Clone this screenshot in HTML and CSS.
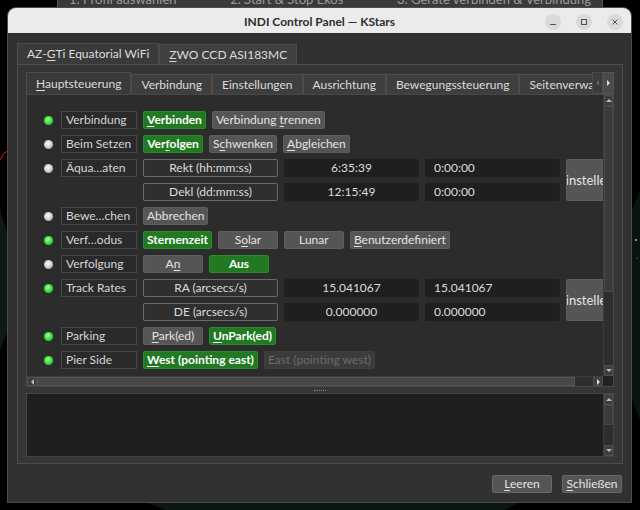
FILE: index.html
```html
<!DOCTYPE html>
<html lang="de">
<head>
  <meta charset="UTF-8">
  <title>INDI Control Panel — KStars</title>
  <link rel="stylesheet" href="styles.css">
</head>
<body>
  <div class="desktop">
    <svg class="sky" width="640" height="510" viewBox="0 0 640 510">
      <path d="M0 160 L4 153 L8 151" stroke="#d01818" fill="none" stroke-width="1"/>
      <path d="M0 210 L8 236 L8 330 L0 350 Z" fill="#0b1a12"/>
      <path d="M146 502 L520 502 L505 510 L165 510 Z" fill="#0a1711"/>
      <path d="M632 210 L640 190 L640 420 L632 400 Z" fill="#08140e"/>
      <circle cx="636" cy="240" r="0.9" fill="#cfcfcf"/>
      <circle cx="637" cy="258" r="0.6" fill="#9a9a9a"/>
    </svg>

    <div class="ekos-strip">
      <span>1. Profil auswählen</span>
      <span>2. Start &amp; Stop Ekos</span>
      <span>3. Geräte verbinden &amp; Verbindung</span>
    </div>

    <div class="window">
      <div class="titlebar">
        <span class="title">INDI Control Panel — KStars</span>
        <div class="wm-buttons">
          <span class="wm-btn"><svg width="16" height="16" viewBox="0 0 16 16"><path d="M5 10.5h6" stroke="#555" stroke-width="1"/></svg></span>
          <span class="wm-btn"><svg width="16" height="16" viewBox="0 0 16 16"><rect x="5.5" y="5.5" width="5" height="5" fill="none" stroke="#555" stroke-width="1"/></svg></span>
          <span class="wm-btn"><svg width="16" height="16" viewBox="0 0 16 16"><path d="M5.5 5.5l5 5M10.5 5.5l-5 5" stroke="#555" stroke-width="1"/></svg></span>
        </div>
      </div>

      <div class="win-body">
        <div class="device-tabs">
          <div class="tab active">AZ-<u>G</u>Ti Equatorial WiFi</div>
          <div class="tab"><u>Z</u>WO CCD ASI183MC</div>
        </div>

        <div class="device-pane">
          <div class="group-tabs">
            <div class="tabs-clip">
              <div class="tab active"><u>H</u>auptsteuerung</div>
              <div class="tab">Verbindung</div>
              <div class="tab">Einstellungen</div>
              <div class="tab">Ausrichtung</div>
              <div class="tab">Bewegungssteuerung</div>
              <div class="tab">Seitenverwaltung</div>
            </div>
            <div class="tab-scroll">
              <span class="arrow-btn disabled"><i class="tri left"></i></span>
              <span class="arrow-btn"><i class="tri right"></i></span>
            </div>
          </div>

          <div class="group-pane">
            <div class="viewport">
              <div class="prop">
                <span class="led on"></span>
                <span class="prop-label">Verbindung</span>
                <div class="switches">
                  <div class="btn checked"><u>V</u>erbinden</div>
                  <div class="btn">Verbindung <u>t</u>rennen</div>
                </div>
              </div>

              <div class="prop">
                <span class="led idle"></span>
                <span class="prop-label">Beim Setzen</span>
                <div class="switches">
                  <div class="btn checked">Ver<u>f</u>olgen</div>
                  <div class="btn">S<u>c</u>hwenken</div>
                  <div class="btn"><u>A</u>bgleichen</div>
                </div>
              </div>

              <div class="prop">
                <span class="led idle"></span>
                <span class="prop-label">Äqua…aten</span>
                <div class="numbers">
                  <span class="num-label">Rekt (hh:mm:ss)</span>
                  <span class="num-value">6:35:39</span>
                  <span class="num-input">0:00:00</span>
                  <div class="btn set"><span>Einstellen</span></div>
                  <span class="num-label">Dekl (dd:mm:ss)</span>
                  <span class="num-value">12:15:49</span>
                  <span class="num-input">0:00:00</span>
                </div>
              </div>

              <div class="prop">
                <span class="led idle"></span>
                <span class="prop-label">Bewe…chen</span>
                <div class="switches">
                  <div class="btn">Abbrechen</div>
                </div>
              </div>

              <div class="prop">
                <span class="led on"></span>
                <span class="prop-label">Verf…odus</span>
                <div class="switches">
                  <div class="btn checked">Sternenzeit</div>
                  <div class="btn">S<u>o</u>lar</div>
                  <div class="btn">Lunar</div>
                  <div class="btn"><u>B</u>enutzerdefiniert</div>
                </div>
              </div>

              <div class="prop">
                <span class="led idle"></span>
                <span class="prop-label">Verfolgung</span>
                <div class="switches">
                  <div class="btn">A<u>n</u></div>
                  <div class="btn checked">Aus</div>
                </div>
              </div>

              <div class="prop">
                <span class="led on"></span>
                <span class="prop-label">Track Rates</span>
                <div class="numbers">
                  <span class="num-label">RA (arcsecs/s)</span>
                  <span class="num-value">15.041067</span>
                  <span class="num-input">15.041067</span>
                  <div class="btn set"><span>Einstellen</span></div>
                  <span class="num-label">DE (arcsecs/s)</span>
                  <span class="num-value">0.000000</span>
                  <span class="num-input">0.000000</span>
                </div>
              </div>

              <div class="prop">
                <span class="led on"></span>
                <span class="prop-label">Parking</span>
                <div class="switches">
                  <div class="btn"><u>P</u>ark(ed)</div>
                  <div class="btn checked"><u>U</u>nPark(ed)</div>
                </div>
              </div>

              <div class="prop">
                <span class="led on"></span>
                <span class="prop-label">Pier Side</span>
                <div class="switches">
                  <div class="btn checked"><u>W</u>est (pointing east)</div>
                  <div class="btn disabled">East (pointing west)</div>
                </div>
              </div>
            </div>

            <div class="vscroll">
              <span class="arrow-btn"><i class="tri up"></i></span>
              <span class="handle"></span>
              <span class="track"></span>
              <span class="arrow-btn"><i class="tri down"></i></span>
            </div>

            <div class="hscroll">
              <span class="arrow-btn"><i class="tri left"></i></span>
              <span class="handle"></span>
              <span class="track"></span>
              <span class="arrow-btn"><i class="tri right"></i></span>
            </div>
            <div class="corner"></div>
          </div>

          <div class="splitter"><span class="grip"></span></div>

          <div class="log">
            <div class="log-text"></div>
            <div class="vscroll">
              <span class="arrow-btn"><i class="tri up"></i></span>
              <span class="handle"></span>
              <span class="track"></span>
              <span class="arrow-btn"><i class="tri down"></i></span>
            </div>
          </div>
        </div>

        <div class="dialog-buttons">
          <div class="btn"><u>L</u>eeren</div>
          <div class="btn"><u>S</u>chließen</div>
        </div>
      </div>
    </div>
  </div>
</body>
</html>
```

FILE: styles.css
```css
/* INDI control panel, dark Qt style */
* {
  box-sizing: border-box;
}
body {
  margin: 0;
  background-color: #000;
  font-family: Lato, "Noto Sans", sans-serif;
  font-size: 12px;
  color: #dcdcdc;
}
u {
  text-underline-offset: 2px;
}
.desktop {
  position: relative;
  width: 640px;
  height: 510px;
  overflow: hidden;
  background-color: #000;
}
.sky {
  position: absolute;
  left: 0;
  top: 0;
}

/* Ekos window behind */
.ekos-strip {
  position: absolute;
  left: 57px;
  top: 0;
  width: 546px;
  height: 8px;
  background-color: #3a3a3a;
  border: 1px solid #555;
  border-top: 0;
  display: flex;
  justify-content: space-between;
  padding: 0 11px;
  overflow: hidden;
  color: #9c9c9c;
  font-size: 13px;
}
.ekos-strip span {
  line-height: 14px;
  margin-top: -8px;
}

/* main window */
.window {
  position: absolute;
  left: 8px;
  top: 8px;
  width: 623px;
  height: 494px;
  background-color: #313131;
  border-radius: 8px 8px 0 0;
  box-shadow: 0 0 0 1px #4c4c4c;
  display: flex;
  flex-direction: column;
  overflow: hidden;
}
.titlebar {
  position: relative;
  height: 25px;
  flex-shrink: 0;
  background-color: #ebebeb;
  display: flex;
  align-items: center;
  justify-content: center;
  color: #2e2e2e;
  font-size: 12px;
  font-weight: bold;
  padding-top: 2px;
}
.wm-buttons {
  position: absolute;
  right: 8px;
  top: 6px;
  display: flex;
  gap: 15px;
}
.wm-btn {
  width: 16px;
  height: 16px;
  border-radius: 50%;
  background-color: #dadada;
  display: flex;
}
.win-body {
  flex: 1;
  display: flex;
  flex-direction: column;
  padding: 10px 8px 9px 9px;
}

/* tabs */
.device-tabs {
  display: flex;
  align-items: flex-end;
  height: 21px;
  flex-shrink: 0;
}
.tab {
  flex-shrink: 0;
  height: 20px;
  line-height: 19px;
  padding: 0 9px;
  background-color: #404040;
  border: 1px solid #4c4c4c;
  border-bottom: 0;
  color: #dcdcdc;
  white-space: nowrap;
}
.tab.active {
  height: 21px;
  line-height: 20px;
  background-color: #3a3a3a;
}
.device-pane {
  height: 400px;
  flex-shrink: 0;
  border: 1px solid #4c4c4c;
  background-color: #363636;
  padding: 7px 8px 6px 8px;
  display: flex;
  flex-direction: column;
}
.group-tabs {
  display: flex;
  height: 22px;
  flex-shrink: 0;
}
.tabs-clip {
  flex: 1;
  display: flex;
  align-items: flex-end;
  overflow: hidden;
}
.group-tabs .tab {
  height: 20px;
  line-height: 19px;
  background-color: #3e3e3e;
}
.group-tabs .tab.active {
  height: 22px;
  line-height: 21px;
  background-color: #3a3a3a;
}
.tab-scroll {
  width: 22px;
  display: flex;
}
.tab-scroll .arrow-btn {
  flex: 1;
  border: 1px solid #555;
  background-color: #4a4a4a;
}
.tab-scroll .arrow-btn.disabled {
  background-color: #3c3c3c;
  border-color: #4a4a4a;
}
.tab-scroll .arrow-btn.disabled .tri {
  opacity: 0.3;
}

/* scroll bar parts */
.arrow-btn {
  display: flex;
  align-items: center;
  justify-content: center;
  background-color: #3e3e3e;
  border: 1px solid #4e4e4e;
}
.tri {
  width: 0;
  height: 0;
  border: 3px solid transparent;
}
.tri.left {
  border-right-color: #bbb;
  border-left-width: 0;
}
.tri.right {
  border-left-color: #ddd;
  border-right-width: 0;
}
.tri.up {
  border-bottom-color: #bbb;
  border-top-width: 0;
}
.tri.down {
  border-top-color: #bbb;
  border-bottom-width: 0;
}

.group-pane {
  height: 293px;
  flex-shrink: 0;
  border: 1px solid #484848;
  background-color: #2c2c2c;
  display: grid;
  grid-template-columns: 576px 10px;
  grid-template-rows: 281px 10px;
}
.viewport {
  overflow: hidden;
  padding: 16px 0 0 17px;
  display: flex;
  flex-direction: column;
  gap: 6px;
}
.vscroll {
  display: flex;
  flex-direction: column;
  background-color: #2e2e2e;
  border-left: 1px solid #3c3c3c;
}
.vscroll .arrow-btn {
  height: 11px;
  flex-shrink: 0;
}
.vscroll .handle {
  height: 186px;
  background-color: #3b3b3b;
  border: 1px solid #474747;
}
.vscroll .track {
  flex: 1;
}
.hscroll {
  display: flex;
  background-color: #2e2e2e;
  border-top: 1px solid #3c3c3c;
}
.hscroll .arrow-btn {
  width: 10px;
}
.hscroll .handle {
  width: 538px;
  background-color: #474747;
  border: 1px solid #555;
}
.hscroll .track {
  flex: 1;
}
.corner {
  background-color: #222;
}

/* property rows */
.prop {
  display: flex;
  align-items: flex-start;
  flex-shrink: 0;
}
.led {
  width: 9px;
  height: 9px;
  margin: 5px 8px 0 0;
  border-radius: 50%;
  flex-shrink: 0;
}
.led.on {
  background: radial-gradient(circle at 45% 40%, #c8ffc0 0, #46f046 35%, #18b418 100%);
}
.led.idle {
  background: radial-gradient(circle at 45% 40%, #fff 0, #d6d6d6 40%, #959595 100%);
}
.prop-label {
  width: 76px;
  height: 18px;
  margin-right: 6px;
  flex-shrink: 0;
  border: 1px solid #484848;
  background-color: #2a2a2a;
  line-height: 16px;
  padding-left: 4px;
  white-space: nowrap;
  overflow: hidden;
  color: #d6d6d6;
}
.switches {
  display: flex;
  gap: 6px;
}
.btn {
  height: 18px;
  min-width: 60px;
  padding: 0 3px;
  line-height: 16px;
  text-align: center;
  white-space: nowrap;
  background-color: #555;
  border: 1px solid #5e5e5e;
  border-radius: 2px;
  color: #e4e4e4;
  flex-shrink: 0;
}
.btn.checked {
  background-color: #217a21;
  border-color: #2b8a2b;
  color: #fff;
  font-weight: bold;
}
.btn.disabled {
  background-color: #3b3b3b;
  border-color: #3f3f3f;
  color: #6a6a6a;
}
.numbers {
  display: grid;
  grid-template-columns: 135px 135px 135px 40px;
  grid-template-rows: 18px 18px;
  gap: 6px 6px;
}
.num-label {
  border: 1px solid #6a6a6a;
  border-radius: 2px;
  background-color: #2f2f2f;
  text-align: center;
  line-height: 16px;
  white-space: nowrap;
}
.num-value,
.num-input {
  background-color: #1f1f1f;
  border-radius: 2px;
  line-height: 18px;
}
.num-value {
  text-align: center;
}
.num-input {
  padding-left: 9px;
}
.btn.set {
  grid-column: 4;
  grid-row: 1 / 3;
  height: auto;
  min-width: 0;
  padding: 0;
  display: flex;
  align-items: center;
  justify-content: center;
  overflow: hidden;
  font-size: 13px;
}

/* splitter + log */
.splitter {
  height: 6px;
  flex-shrink: 0;
  display: flex;
  justify-content: center;
  align-items: center;
}
.grip {
  width: 12px;
  height: 1px;
  border-top: 1px dotted #8a8a8a;
}
.log {
  height: 64px;
  flex-shrink: 0;
  display: flex;
  border: 1px solid #454545;
  background-color: #1f1f1f;
}
.log-text {
  flex: 1;
}
.log .vscroll {
  width: 10px;
}
.log .vscroll .handle {
  height: 20px;
}

/* dialog buttons */
.dialog-buttons {
  display: flex;
  justify-content: flex-end;
  gap: 10px;
  margin-top: 11px;
  padding-right: 1px;
}
.dialog-buttons .btn {
  border-color: #6a6a6a;
}
```
